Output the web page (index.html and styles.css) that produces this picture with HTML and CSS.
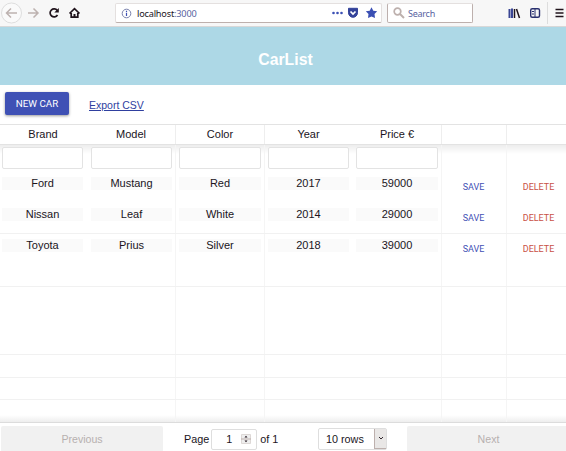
FILE: index.html
```
<!DOCTYPE html>
<html lang="en">
<head>
<meta charset="utf-8">
<title>CarList</title>
<link rel="stylesheet" href="styles.css">
</head>
<body>
<div class="browser">
  <nav class="nav">
    <svg width="84" height="26" viewBox="0 0 84 26" fill="none">
      <circle cx="11.5" cy="13" r="10" fill="#fafafa" stroke="#dedede"/>
      <path d="M17 13H6.5M11 8.5L6.5 13l4.500 4.500M28 13h9.500M33.500 8.500L38 13l-4.500 4.500" stroke="#bdb2b0" stroke-width="1.500"/>
      <path d="M57.300 10.500A4 4 0 1 0 57.500 15" stroke="#20141c" stroke-width="1.700"/>
      <path d="M58.800 8v4.500h-4.500z" fill="#20141c"/>
      <path d="M69.500 13.500L74.500 8.700l5 4.800M71.200 13v4.200h6.600V13" stroke="#20141c" stroke-width="1.700"/>
      <path d="M73.500 14h2v4h-2z" fill="#20141c"/>
    </svg>
  </nav>
  <div class="address">
    <svg width="11" height="11" viewBox="0 0 11 11" fill="none" stroke="#7a82ad">
      <circle cx="5.500" cy="5.500" r="4.300"/><path d="M5.500 4.800V8M5.500 2.800v1.200" stroke="#3f51b5" stroke-width="1.200"/>
    </svg>
    <span class="url">localhost<span class="port">:3000</span></span>
    <svg class="page-actions" width="50" height="14" viewBox="0 0 50 14">
      <g fill="#3b50b4"><circle cx="3.500" cy="7" r="1.300"/><circle cx="7.500" cy="7" r="1.300"/><circle cx="11.500" cy="7" r="1.300"/>
      <path d="M41.500 1.300l1.800 3.400 3.900.6-2.700 2.800.5 4-3.500-1.700-3.500 1.700.5-4-2.700-2.800 3.900-.6z"/></g>
      <path d="M18.500 2.300h9v4.500a4.500 4.500 0 0 1-9 0z" fill="#34439a" stroke="#34439a"/>
      <path d="M20.500 5.500L23 8l2.500-2.500" fill="none" stroke="#fff" stroke-width="1.700"/>
    </svg>
  </div>
  <div class="search">
    <svg width="12" height="12" viewBox="0 0 12 12" fill="none" stroke="#bdb0ad"><circle cx="4.500" cy="4.500" r="3.300" stroke-width="1.700"/><path d="M7 7l4 4" stroke-width="2"/></svg>
    <span>Search</span>
  </div>
  <svg class="tools" width="60" height="26" viewBox="0 0 60 26" fill="none">
    <path d="M3.500 9v9M6 8.500V18" stroke="#3b4694" stroke-width="2"/><path d="M8.500 9v9M10.500 9l3 9" stroke="#20141c" stroke-width="1.500"/>
    <rect x="24.700" y="8.700" width="8.800" height="8.600" rx="1.500" stroke="#29306f" stroke-width="1.400"/><path d="M29 9v8.500" stroke="#29306f"/><path d="M26 11.500h2M26 14h2" stroke="#29306f"/>
    <path d="M41.500 2v22" stroke="#ddd"/>
    <path d="M49.500 9.500h8M49.500 13h8M49.500 16.500h8" stroke="#20141c" stroke-width="1.500"/>
  </svg>
</div>
<header class="banner"><h1>CarList</h1></header>
<div class="actions"><button class="new-car">NEW CAR</button><a class="export">Export CSV</a></div>
<main class="table">
  <div class="row head"><div>Brand</div><div>Model</div><div>Color</div><div>Year</div><div>Price €</div><div></div><div></div></div>
  <div class="body">
    <div class="row filter"><div><i></i></div><div><i></i></div><div><i></i></div><div><i></i></div><div><i></i></div><div></div><div></div></div>
    <div class="row car"><div><p>Ford</p></div><div><p>Mustang</p></div><div><p>Red</p></div><div><p>2017</p></div><div><p>59000</p></div><div class="save">SAVE</div><div class="delete">DELETE</div></div>
    <div class="row car ruled"><div><p>Nissan</p></div><div><p>Leaf</p></div><div><p>White</p></div><div><p>2014</p></div><div><p>29000</p></div><div class="save">SAVE</div><div class="delete">DELETE</div></div>
    <div class="row car last"><div><p>Toyota</p></div><div><p>Prius</p></div><div><p>Silver</p></div><div><p>2018</p></div><div><p>39000</p></div><div class="save">SAVE</div><div class="delete">DELETE</div></div>
    <div class="row empty ruled"><div></div><div></div><div></div><div></div><div></div><div></div><div></div></div>
    <div class="row empty tall ruled"><div></div><div></div><div></div><div></div><div></div><div></div><div></div></div>
    <div class="row empty ruled"><div></div><div></div><div></div><div></div><div></div><div></div><div></div></div>
    <div class="row empty short ruled"><div></div><div></div><div></div><div></div><div></div><div></div><div></div></div>
    <div class="row empty"><div></div><div></div><div></div><div></div><div></div><div></div><div></div></div>
  </div>
</main>
<footer class="pager">
  <div class="page-button previous">Previous</div>
  <div class="page-info">
    <span>Page</span>
    <div class="page-number"><span>1</span><svg width="10" height="10" viewBox="0 0 10 10"><path d="M.5.500h9v9h-9z" fill="#eee" stroke="#ddd8d6"/><path d="M0 5h10" stroke="#bdb0ad"/><path d="M3.500 3.500h3L5 1.700zM3.500 6.500h3L5 8.300z" fill="#20141c"/></svg></div>
    <span>of 1</span>
  </div>
  <div class="select"><span>10 rows</span><div class="arrow"><svg width="6" height="5" viewBox="0 0 6 5" fill="none"><path d="M1 1l2 2 2-2" stroke="#30262c"/></svg></div></div>
  <div class="page-button next">Next</div>
</footer>
</body>
</html>
```
FILE: styles.css
```
* { box-sizing: border-box; }
body {
  margin: 0;
  width: 566px;
  height: 451px;
  overflow: hidden;
  background: #fff;
  color: #20141c;
  font: 11px/13px "Liberation Sans", Arial, sans-serif;
}
svg { display: block; flex: none; }

.browser {
  display: flex;
  height: 27px;
  background: #f7f7f7;
  border-bottom: 1px solid #d8d8d8;
}
.nav { width: 115px; }
.address, .search {
  display: flex;
  align-items: center;
  height: 20px;
  margin-top: 3px;
  background: #fff;
  border: 1px solid #e4e0df;
  border-bottom-color: #bdb0ad;
  border-radius: 2px;
  font: 9px/12px "Noto Sans", sans-serif;
}
.address { width: 267px; padding: 0 1px 0 5px; }
.url { margin: 1px 0 0 5px; font-size: 9.2px; letter-spacing: -0.2px; }
.port { color: #59639f; }
.page-actions { margin-left: auto; }
.search {
  width: 86px;
  margin-left: 5px;
  padding-left: 5px;
  gap: 3px;
  border-color: #e4e0df #bdb0ad #bdb0ad;
  color: #59639f;
  letter-spacing: -0.25px;
}
.search span { margin-top: 1px; }
.tools { margin-left: 33px; }

.banner {
  display: flex;
  justify-content: center;
  height: 58px;
  padding: 24px 0 0 5px;
  background: #add8e6;
}
h1 {
  margin: 0;
  color: #fff;
  font-size: 15.8px;
  line-height: 18px;
}
.actions {
  display: flex;
  align-items: flex-start;
  height: 39px;
  padding: 7px 0 0 5px;
}
.new-car {
  width: 64px;
  height: 23px;
  padding: 0;
  border: 0;
  border-radius: 2px;
  background: #3f51b5;
  box-shadow: 0 1px 3px rgba(0, 0, 0, .4);
  color: #fff;
  font: 9.8px/23px Roboto, sans-serif;
}
.export {
  margin: 7px 0 0 20px;
  color: #2f3f9f;
  font-size: 10.5px;
  text-decoration: underline;
}

.table { height: 298px; border-top: 1px solid #e3e3e3; }
.row {
  display: grid;
  grid-template-columns: 87px 89px 89px 88px 89px 65px 65px;
  width: 572px;
}
.row > div { min-width: 0; border-right: 1px solid transparent; text-align: center; }
.row > div:nth-child(2), .row > div:nth-child(3),
.row > div:nth-child(5), .row > div:nth-child(6) { border-right-color: #f5f5f5; }
.head { height: 20px; border-bottom: 1px solid #e3e3e3; line-height: 19px; }
.head > div:nth-child(n) { border-right-color: #eee; }
.head > div:nth-child(1), .head > div:nth-child(4) { border-right-color: transparent; }
.body {
  height: 277px;
  overflow: hidden;
  background: linear-gradient(#ededed, #fff 9px, #fff 270px, #eee);
}
.ruled { border-bottom: 1px solid #f1f1f1; }
.filter { height: 27px; }
.filter i {
  display: block;
  height: 22px;
  margin: 2px 3px 0 2px;
  background: #fff;
  border: 1px solid #e3e3e3;
  border-radius: 2px;
}
.row > div:nth-child(n+2) > i, .row > div:nth-child(n+2) > p { margin-left: 3px; }
.row > div:nth-child(2) > i, .row > div:nth-child(2) > p { margin-left: 4px; }
.car { height: 31px; }
.last { height: 30px; }
.car p {
  height: 13px;
  margin: 5px 3px 0 2px;
  background: #fafafa;
}
.save, .delete { padding-top: 9px; font: 9px/13px Roboto, sans-serif; }
.row > .save, .row > .delete { padding-right: 1px; }
.save { color: #3f51b5; }
.delete { color: #c95145; }
.empty { height: 23px; }
.tall { height: 68px; }
.short { height: 22px; }

.pager {
  display: flex;
  height: 29px;
  padding: 3px 0 0 1px;
  border-top: 1px solid #dcdcdc;
}
.page-button {
  height: 26px;
  background: #f1f1f1;
  border-radius: 2px;
  color: #b7b0af;
  font-size: 10.6px;
  line-height: 27px;
  text-align: center;
}
.previous { width: 162px; }
.next { width: 163px; margin-left: 20px; }
.page-info { display: flex; flex: none; align-items: center; margin-left: 21px; width: 110px; height: 26px; font-size: 10.8px; }
.page-number {
  display: flex;
  align-items: center;
  justify-content: space-between;
  width: 46px;
  height: 21px;
  margin: 0 3px 0 2px;
  padding: 0 5px 0 14px;
  border: 1px solid #dedede;
  border-radius: 2px;
}
.previous, .next, .select { flex: none; }
.select {
  display: flex;
  justify-content: space-between;
  width: 69px;
  height: 22px;
  margin: 2px 0 0 24px;
  padding-left: 7px;
  border: 1px solid #dedede;
  border-radius: 2px;
  font-size: 10.8px;
  line-height: 20px;
}
.arrow {
  display: grid;
  place-items: center;
  width: 12px;
  background: #e9e7e6;
  border-left: 1px solid #bdb0ad;
  border-bottom: 1px solid #bdb0ad;
}
```
